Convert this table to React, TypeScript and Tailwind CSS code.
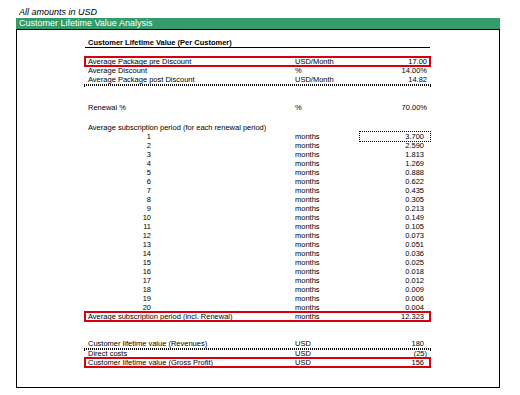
import React from 'react';

type RowProps = {
  label: React.ReactNode;
  unit: string;
  value: string;
  paren?: boolean;
  boxed?: boolean;
  selected?: boolean;
  rule?: boolean;
  className?: string;
};

const Row = ({ label, unit, value, paren, boxed, selected, rule, className = '' }: RowProps) => (
  <div className={className}>
    <div
      className={`flex h-[9px] leading-[9px] ${boxed ? 'outline-2 outline-solid outline-[#d8000f] -outline-offset-1' : ''}`}
    >
      <div className="w-[207px] pl-[3px] whitespace-nowrap">{label}</div>
      <div className="w-[68px] pl-[3px] whitespace-nowrap">{unit}</div>
      <div
        className={`w-[70px] text-right whitespace-nowrap ${paren ? 'pr-[3px]' : 'pr-[6px]'} ${selected ? 'outline-1 outline-dotted outline-black' : ''}`}
      >
        {value}
      </div>
    </div>
    {/* dotted bottom border like in the sheet */}
    {rule && <div className="mt-[1px] w-[345px] h-0 outline-[0.5px] outline-dotted outline-black" />}
  </div>
);

const periods = [
  '3.700', '2.590', '1.813', '1.269', '0.888', '0.622', '0.435', '0.305', '0.213', '0.149',
  '0.105', '0.073', '0.051', '0.036', '0.025', '0.018', '0.012', '0.009', '0.006', '0.004',
];

export default function App() {
  return (
    <div className="w-[520px] h-[395px] bg-white pt-[7px] pl-[16px] text-black font-['Liberation_Sans',Arial,sans-serif]">
      <div className="h-[11px] leading-[11px] pl-[3px] text-[9px] italic">All amounts in USD</div>
      <div className="w-[484px]">
        <div className="h-[11px] leading-[11px] bg-[#349b6a] pl-[3px] text-[9px] text-white">
          Customer Lifetime Value Analysis
        </div>
        <div className="border border-black h-[359px] text-[7.5px]">
          <div className="ml-[68px] w-[345px]">
            <div className="mt-[9px] h-[8px] leading-[8px] box-content border-b border-black pl-[3px] font-bold">
              Customer Lifetime Value (Per Customer)
            </div>

            <Row className="mt-[9px]" label="Average Package pre Discount" unit="USD/Month" value="17.00" paren boxed />
            <Row label="Average Discount" unit="%" value="14.00%" paren />
            <Row label="Average Package post Discount" unit="USD/Month" value="14.82" paren rule />

            <Row className="mt-[19px]" label="Renewal %" unit="%" value="70.00%" paren />

            <div className="mt-[11px] h-[9px] leading-[9px] pl-[3px] whitespace-nowrap">
              Average subscription period (for each renewal period)
            </div>
            {periods.map((v, i) => (
              <Row
                key={i}
                label={<div className="w-[63px] text-right">{i + 1}</div>}
                unit="months"
                value={v}
                selected={i === 0}
              />
            ))}
            <Row label="Average subscription period (incl. Renewal)" unit="months" value="12.323" boxed />

            <Row className="mt-[18px]" label="Customer lifetime value (Revenues)" unit="USD" value="180" rule />
            <Row label="Direct costs" unit="USD" value="(25)" paren />
            <Row label="Customer lifetime value (Gross Profit)" unit="USD" value="156" boxed />
          </div>
        </div>
      </div>
    </div>
  );
}
